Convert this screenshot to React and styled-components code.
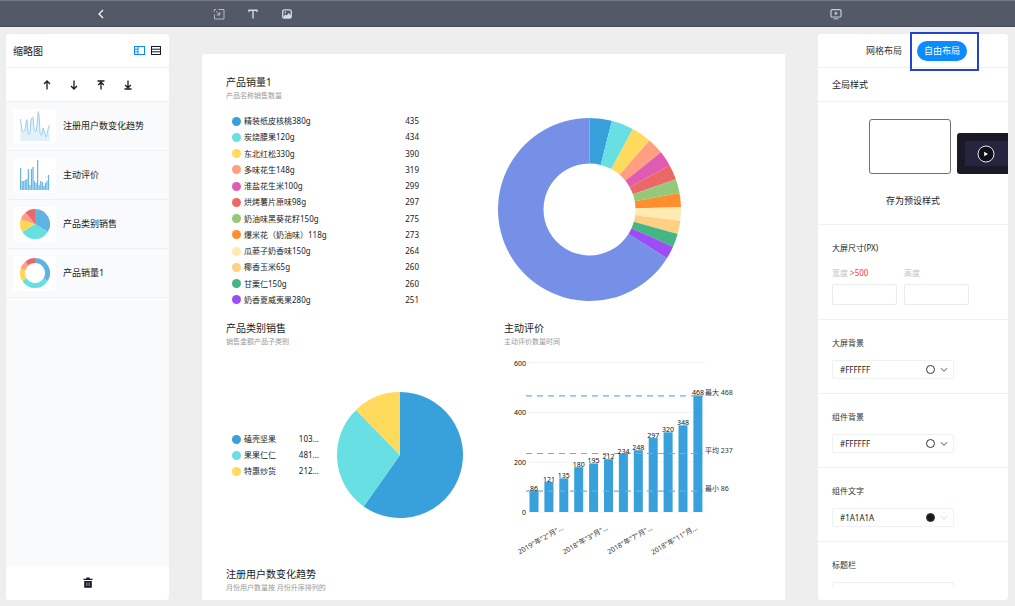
import React, { useState } from "react";
import styled, { createGlobalStyle } from "styled-components";

const GlobalStyle = createGlobalStyle`
	* {
		box-sizing: border-box;
	}
	body {
		margin: 0;
		background: #eeeeee;
		color: #222222;
		font-family: "Noto Sans", "Noto Sans CJK SC", sans-serif;
		font-size: 9px;
		line-height: 16px;
	}
	button, input, select {
		font: inherit;
		color: inherit;
	}
	h2, p, ul {
		margin: 0;
		padding: 0;
		font-weight: 400;
		list-style: none;
	}
	svg {
		display: block;
	}
`;

const Page = styled.div`
	display: flex;
	flex-direction: column;
	height: 100vh;
`;

const TopBar = styled.header`
	display: grid;
	grid-template-columns: 202px 1fr 196px;
	flex: none;
	height: 27px;
	background: #535966;
	border-top: 1px solid #747780;
	border-bottom: 1px solid #464c5a;
`;

const TopGroup = styled.div`
	display: flex;
	align-items: center;
	justify-content: ${({ $align }) => $align || "flex-start"};
	gap: 18px;
	padding: 0 9px;
`;

const IconButton = styled.button`
	display: flex;
	align-items: center;
	justify-content: center;
	width: 16px;
	height: 16px;
	padding: 0;
	border: 0;
	background: none;
	color: ${({ $color }) => $color || "#1a1a24"};
	cursor: pointer;
`;

const Workspace = styled.div`
	display: flex;
	flex: 1;
	gap: 33px;
	min-height: 0;
	padding: 7px 7px 6px 6px;
`;

const Panel = styled.aside`
	display: flex;
	flex-direction: column;
	flex: none;
	width: ${({ $width }) => $width};
	background: #ffffff;
	border-radius: 3px;
`;

const PanelRow = styled.div`
	display: flex;
	align-items: center;
	justify-content: ${({ $justify }) => $justify || "flex-start"};
	gap: ${({ $gap }) => $gap || "0"};
	flex: none;
	height: 34px;
	padding: 0 ${({ $pad }) => $pad || "14px"};
	border-bottom: 1px solid #f0f0f0;
`;

const PanelTitle = styled.h2`
	flex: 1;
	font-size: 10px;
	line-height: 16px;
`;

const ThumbList = styled.ul`
	flex: 1;
	background: #f8fafb;
`;

const ThumbItem = styled.li`
	display: flex;
	align-items: center;
	gap: 7px;
	height: 49px;
	padding-left: 7px;
	border-bottom: 1px solid #eeeff0;
	cursor: pointer;
`;

const ThumbBox = styled.div`
	display: flex;
	align-items: center;
	justify-content: center;
	width: 43px;
	height: 35px;
	background: #ffffff;
	border-radius: 3px;
`;

const PanelFooter = styled.div`
	display: flex;
	align-items: center;
	justify-content: center;
	flex: none;
	height: 34px;
`;

const Canvas = styled.main`
	display: grid;
	grid-template-columns: 1fr 1fr;
	grid-auto-rows: 246px;
	column-gap: 17px;
	flex: 1;
	min-width: 0;
	margin-top: 20px;
	padding: 20px 20px 0 24px;
	background: #ffffff;
	overflow: hidden;
`;

const Card = styled.section`
	display: flex;
	flex-direction: column;
	grid-column: ${({ $wide }) => ($wide ? "1 / -1" : "auto")};
`;

const CardTitle = styled.h2`
	font-size: 10px;
	line-height: 16px;
	color: #1a1a1a;
`;

const CardSub = styled.p`
	font-size: 7px;
	line-height: 12px;
	color: #999999;
`;

const CardBody = styled.div`
	display: flex;
	align-items: ${({ $align }) => $align || "flex-start"};
	padding: ${({ $pad }) => $pad || "0"};
`;

const Legend = styled.ul`
	display: flex;
	flex-direction: column;
	justify-content: space-between;
	width: ${({ $width }) => $width};
	height: ${({ $height }) => $height};
	font-size: 8px;
`;

const LegendRow = styled.li`
	display: flex;
	align-items: center;
	gap: 3px;
	height: 16px;
`;

const Dot = styled.span`
	width: 9px;
	height: 9px;
	border-radius: 50%;
	background: ${({ $color }) => $color};
`;

const LegendName = styled.span`
	flex: 1;
`;

const Tab = styled.button`
	height: 20px;
	padding: 0 7px;
	border: 0;
	border-radius: 10px;
	line-height: 20px;
	background: ${({ $active }) => ($active ? "#0a8cff" : "transparent")};
	color: ${({ $active }) => ($active ? "#ffffff" : "#333333")};
	cursor: pointer;
`;

const Marked = styled.div`
	position: relative;
	display: flex;
	&::after {
		content: "";
		position: absolute;
		top: -9px;
		right: -12px;
		bottom: -10px;
		left: -7px;
		border: 2px solid #2245c9;
		pointer-events: none;
	}
`;

const Settings = styled.div`
	flex: 1;
	min-height: 0;
	margin-bottom: 14px;
	overflow: hidden;
`;

const PresetBlock = styled.div`
	display: flex;
	flex-direction: column;
	gap: 19px;
	height: 123px;
	padding-top: 17px;
	border-bottom: 1px solid #f0f0f0;
`;

const PresetRow = styled.div`
	display: flex;
	align-items: flex-end;
	gap: 6px;
	padding-left: 51px;
	overflow: hidden;
`;

const LightPreset = styled.button`
	flex: none;
	width: 82px;
	height: 55px;
	border: 1px solid #707070;
	border-radius: 3px;
	background: #ffffff;
`;

const DarkPreset = styled.button`
	display: flex;
	flex: none;
	width: 58px;
	height: 41px;
	padding: 8px 0 8px 8px;
	border: 0;
	border-radius: 3px;
	background: #191928;
`;

const DarkPresetInner = styled.span`
	display: flex;
	flex: 1;
	align-items: center;
	padding-left: 12px;
	height: 25px;
	background: #25253f;
`;

const PresetSave = styled.button`
	align-self: center;
	padding: 0;
	border: 0;
	background: none;
	cursor: pointer;
`;

const Section = styled.div`
	display: flex;
	flex-direction: column;
	padding: 15px 14px 14px;
	border-bottom: 1px solid #f0f0f0;
	font-size: 8px;
`;

const SectionLabel = styled.label`
	color: #333333;
`;

const SizeRow = styled.div`
	display: flex;
	gap: 7px;
	padding-top: 9px;
`;

const SizeField = styled.label`
	display: flex;
	flex-direction: column;
	gap: 3px;
	color: #c4c4c4;
`;

const Warn = styled.span`
	color: #ff3333;
`;

const SizeInput = styled.input`
	width: 65px;
	height: 21px;
	padding: 0 6px;
	border: 1px solid #e9ebec;
	border-radius: 2px;
	outline: none;
`;

const ColorBox = styled.div`
	display: flex;
	align-items: center;
	gap: 5px;
	width: 122px;
	height: 19px;
	margin-top: 9px;
	padding: 0 5px 0 7px;
	border: 1px solid #eef1f2;
	border-radius: 2px;
`;

const ColorSelect = styled.select`
	flex: 1;
	min-width: 0;
	padding: 0;
	border: 0;
	background: none;
	appearance: none;
	outline: none;
`;

const ColorRing = styled.span`
	width: 9px;
	height: 9px;
	border: 1px solid #333333;
	border-radius: 50%;
	background: ${({ $color }) => $color};
`;

const SALES = [
	{ name: "精装纸皮核桃380g", value: 435, color: "#38a0da" },
	{ name: "炭烧腰果120g", value: 434, color: "#68e0e3" },
	{ name: "东北红松330g", value: 390, color: "#ffda5c" },
	{ name: "多味花生148g", value: 319, color: "#ff9e80" },
	{ name: "淮盐花生米100g", value: 299, color: "#e05cb0" },
	{ name: "烘烤薯片原味98g", value: 297, color: "#eb6868" },
	{ name: "奶油味黑葵花籽150g", value: 275, color: "#95c878" },
	{ name: "爆米花（奶油味）118g", value: 273, color: "#ff8f2e" },
	{ name: "瓜蒌子奶香味150g", value: 264, color: "#ffebb0" },
	{ name: "椰香玉米65g", value: 260, color: "#fdd083" },
	{ name: "甘栗仁150g", value: 260, color: "#44b584" },
	{ name: "奶香夏威夷果280g", value: 251, color: "#9d4df5" },
];

const OTHER_SALES = { value: 7310, color: "#7690e8" };

const CATEGORIES = [
	{ name: "磕壳坚果", value: 1030, label: "103...", color: "#38a0da" },
	{ name: "果果仁仁", value: 481, label: "481...", color: "#68e0e3" },
	{ name: "特惠炒货", value: 212, label: "212...", color: "#ffda5c" },
];

const REVIEWS = [86, 121, 135, 180, 195, 212, 234, 248, 297, 320, 348, 468];

const REVIEW_MARKS = [
	{ label: "最大 468", value: 468 },
	{ label: "平均 237", value: 237 },
	{ label: "最小 86", value: 86 },
];

const REVIEW_MONTHS = [
	{ bar: 2, label: '2019"年"2"月"...' },
	{ bar: 5, label: '2018"年"3"月"...' },
	{ bar: 8, label: '2018"年"7"月"...' },
	{ bar: 11, label: '2018"年"11"月...' },
];

const THUMB_SLICES = [
	{ value: 34, color: "#5fb3e2" },
	{ value: 32, color: "#64dfe2" },
	{ value: 14, color: "#ffd658" },
	{ value: 9, color: "#ff9e80" },
	{ value: 11, color: "#eb6868" },
];

const THUMB_BARS = [
	22, 9, 9, 10, 11, 21, 5, 21, 23, 9, 7, 30, 5, 9, 8, 4, 7, 9, 15,
];

const TREND_LINE =
	"M0.5 8L2 20C3 21 4 21 5 19L6.5 9C7 8 7.5 9 8 22C8.5 24 9.5 24 10 20L11 9C11.5 7 12.5 6 13 6.5L14 17C14.5 20 15.5 21 16 20L17 15L18.2 0.5L19 4L20 21C20.5 25 21.5 25 22 23L23 17L24.5 21C25 23 25.5 25 26 26C27 26 27.5 19 28 18L29.5 14";

const point = (c, r, turn) => {
	const a = turn * Math.PI * 2;
	return `${c + r * Math.sin(a)} ${c - r * Math.cos(a)}`;
};

const Pie = ({ data, radius, hole = 0, title }) => {
	const total = data.reduce((sum, d) => sum + d.value, 0);
	const size = radius * 2;
	let used = 0;
	return (
		<svg width={size} height={size} role="img" aria-label={title}>
			{data.map((d, index) => {
				const from = used / total;
				used += d.value;
				const to = used / total;
				const large = to - from > 0.5 ? 1 : 0;
				const inner = hole
					? `L${point(radius, hole, to)}A${hole} ${hole} 0 ${large} 0 ${point(
							radius,
							hole,
							from
					  )}Z`
					: `L${radius} ${radius}Z`;
				return (
					<path
						key={index}
						fill={d.color}
						d={`M${point(radius, radius, from)}A${radius} ${radius} 0 ${large} 1 ${point(
							radius,
							radius,
							to
						)}${inner}`}
					/>
				);
			})}
		</svg>
	);
};

const ChartLegend = ({ data, width, height }) => (
	<Legend $width={width} $height={height}>
		{data.map((d) => (
			<LegendRow key={d.name}>
				<Dot $color={d.color} />
				<LegendName>{d.name}</LegendName>
				<span>{d.label || d.value}</span>
			</LegendRow>
		))}
	</Legend>
);

const ReviewChart = () => {
	const base = 160;
	const scale = (v) => base - v * 0.249;
	const barX = (index) => 30 + index * 14.9;
	return (
		<svg width="240" height="210" fontSize="7" fill="#333" role="img" aria-label="主动评价">
			{[0, 200, 400, 600].map((tick) => (
				<g key={tick}>
					<line x1="24" x2="201" y1={scale(tick)} y2={scale(tick)} stroke="#f2f2f2" />
					<text x="22" y={scale(tick) + 3} textAnchor="end" fill="#111">
						{tick}
					</text>
				</g>
			))}
			{REVIEWS.map((v, index) => (
				<rect
					key={index}
					x={barX(index) - 4.5}
					y={scale(v)}
					width="9"
					height={base - scale(v)}
					fill="#38a0da"
				/>
			))}
			{REVIEW_MARKS.map((m) => (
				<g key={m.label}>
					<line
						x1="22"
						x2="199"
						y1={scale(m.value) + 0.5}
						y2={scale(m.value) + 0.5}
						stroke="#5db7e4"
						strokeWidth="1.2"
						strokeDasharray="6 5"
					/>
					<text x="201" y={scale(m.value)}>
						{m.label}
					</text>
				</g>
			))}
			{REVIEWS.map((v, index) => (
				<text key={index} x={barX(index)} y={scale(v)} textAnchor="middle" fill="#111">
					{v}
				</text>
			))}
			{REVIEW_MONTHS.map((m) => (
				<text
					key={m.bar}
					textAnchor="end"
					transform={`translate(${barX(m.bar)} 177) rotate(-30)`}>
					{m.label}
				</text>
			))}
		</svg>
	);
};

const TrendThumb = () => (
	<svg width="30" height="30" viewBox="0 0 30 30">
		<path d={`${TREND_LINE}V30H0.5Z`} fill="#e1f0fa" />
		<path d={TREND_LINE} fill="none" stroke="#9bcfee" />
	</svg>
);

const BarThumb = () => (
	<svg width="30" height="30" viewBox="0 0 30 30">
		{THUMB_BARS.map((h, index) => (
			<rect
				key={index}
				x={index * 1.55}
				y={30 - h}
				width="1.2"
				height={h}
				fill="#62b4e3"
			/>
		))}
	</svg>
);

const THUMBS = [
	{ title: "注册用户数变化趋势", icon: <TrendThumb /> },
	{ title: "主动评价", icon: <BarThumb /> },
	{ title: "产品类别销售", icon: <Pie data={THUMB_SLICES} radius={15} /> },
	{ title: "产品销量1", icon: <Pie data={THUMB_SLICES} radius={15} hole={10} /> },
];

const Icon = ({ size = 12, children }) => (
	<svg
		width={size}
		height={size}
		viewBox="0 0 12 12"
		fill="none"
		stroke="currentColor"
		aria-hidden="true">
		{children}
	</svg>
);

const MOVES = [
	{ title: "上移", d: "M6 10.5V2M3 5L6 2L9 5" },
	{ title: "下移", d: "M6 1.5V10M3 7L6 10L9 7" },
	{ title: "置顶", d: "M2.5 2H9.5M6 10.5V3M3.2 6L6 3.2L8.8 6" },
	{ title: "置底", d: "M2.5 10H9.5M6 1.5V9M3.2 6L6 8.8L8.8 6" },
];

const Chevron = ({ color }) => (
	<svg width="8" height="6" viewBox="0 0 8 6" fill="none" stroke={color}>
		<path d="M1 1.2L4 4.3L7 1.2" />
	</svg>
);

const ColorSection = ({ id, label, color, chevron = "#555" }) => (
	<Section>
		<SectionLabel htmlFor={id}>{label}</SectionLabel>
		<ColorBox>
			<ColorSelect id={id} defaultValue={color}>
				<option value={color}>{color}</option>
			</ColorSelect>
			<ColorRing $color={color} />
			<Chevron color={chevron} />
		</ColorBox>
	</Section>
);

const App = () => {
	const [layout, setLayout] = useState("free");

	return (
		<>
			<GlobalStyle />
			<Page>
				<TopBar>
					<TopGroup $align="center">
						<IconButton aria-label="返回" $color="#ffffff">
							<Icon>
								<path d="M8 2L4 6L8 10" strokeWidth="1.2" />
							</Icon>
						</IconButton>
					</TopGroup>
					<TopGroup>
						<IconButton aria-label="组件" $color="#b3bccb">
							<Icon>
								<path d="M5.5 1.5H11V11H1.5V6.5M1.2 3.8V1.5H3.2M3.2 3.5L6.5 6.8M6.8 4V7H3.8" />
							</Icon>
						</IconButton>
						<IconButton aria-label="文本" $color="#cfdcec">
							<Icon>
								<path d="M2 4V2.2H10V4M6 2.2V10.5" strokeWidth="1.4" />
							</Icon>
						</IconButton>
						<IconButton aria-label="图片" $color="#cfdcec">
							<Icon>
								<rect x="1.7" y="1.8" width="8.6" height="8.4" rx="1.8" strokeWidth="1.3" />
								<path d="M2 9.5L4.2 6.2L5.6 7.5L7.8 5L10 7.5V10H2Z" fill="currentColor" stroke="none" />
								<circle cx="4.3" cy="4.4" r="0.8" fill="currentColor" stroke="none" />
							</Icon>
						</IconButton>
					</TopGroup>
					<TopGroup>
						<IconButton aria-label="预览" $color="#c3cddb">
							<Icon>
								<rect x="1" y="1.6" width="10" height="7.4" rx="1.2" strokeWidth="1.2" />
								<path d="M4.8 3.4L8 5.3L4.8 7.2Z" fill="currentColor" stroke="none" />
								<path d="M3.5 10.8H8.5" />
							</Icon>
						</IconButton>
					</TopGroup>
				</TopBar>

				<Workspace>
					<Panel $width="163px">
						<PanelRow $pad="5px 0 7px">
							<PanelTitle>缩略图</PanelTitle>
							<IconButton aria-label="缩略图视图" $color="#0a8cff">
								<Icon>
									<rect x="0.5" y="1.5" width="10" height="8" />
									<path d="M4 1.5V9.5M0.5 4.2H4M0.5 6.8H4" />
								</Icon>
							</IconButton>
							<IconButton aria-label="列表视图">
								<Icon>
									<rect x="1.5" y="1.5" width="9" height="8" />
									<path d="M1.5 4.2H10.5M1.5 6.8H10.5" />
								</Icon>
							</IconButton>
						</PanelRow>
						<PanelRow $justify="center" $gap="11px">
							{MOVES.map((m) => (
								<IconButton key={m.title} aria-label={m.title}>
									<Icon>
										<path d={m.d} strokeWidth="1.3" />
									</Icon>
								</IconButton>
							))}
						</PanelRow>
						<ThumbList>
							{THUMBS.map((t) => (
								<ThumbItem key={t.title}>
									<ThumbBox>{t.icon}</ThumbBox>
									<span>{t.title}</span>
								</ThumbItem>
							))}
						</ThumbList>
						<PanelFooter>
							<IconButton aria-label="删除">
								<Icon>
									<path
										d="M1.5 1.8H4.3V0.6H7.7V1.8H10.5V3.1H1.5ZM2.2 3.9H9.8V10.8H2.2Z"
										fill="currentColor"
										stroke="none"
									/>
									<path d="M4.5 5.3V9M6 5.3V9M7.5 5.3V9" stroke="#aaaab4" strokeWidth="0.6" />
								</Icon>
							</IconButton>
						</PanelFooter>
					</Panel>

					<Canvas>
						<Card $wide>
							<CardTitle>产品销量1</CardTitle>
							<CardSub>产品名称销售数量</CardSub>
							<CardBody $pad="11px 0 0 6px">
								<ChartLegend data={SALES} width="187px" height="195px" />
								<CardBody $pad="5px 0 0 79px">
									<Pie
										title="产品销量1"
										data={[...SALES, OTHER_SALES]}
										radius={91.5}
										hole={46}
									/>
								</CardBody>
							</CardBody>
						</Card>
						<Card>
							<CardTitle>产品类别销售</CardTitle>
							<CardSub>销售金额产品子类别</CardSub>
							<CardBody $align="center" $pad="44px 0 0 6px">
								<ChartLegend data={CATEGORIES} width="87px" height="48px" />
								<CardBody $pad="0 0 0 18px">
									<Pie title="产品类别销售" data={CATEGORIES} radius={63} />
								</CardBody>
							</CardBody>
						</Card>
						<Card>
							<CardTitle>主动评价</CardTitle>
							<CardSub>主动评价数量时间</CardSub>
							<CardBody $pad="4px 0 0">
								<ReviewChart />
							</CardBody>
						</Card>
						<Card $wide>
							<CardTitle>注册用户数变化趋势</CardTitle>
							<CardSub>月份用户数量按 月份升序排列的</CardSub>
						</Card>
					</Canvas>

					<Panel $width="190px">
						<PanelRow $justify="center" $gap="8px">
							<Tab $active={layout === "grid"} onClick={() => setLayout("grid")}>
								网格布局
							</Tab>
							<Marked>
								<Tab $active={layout === "free"} onClick={() => setLayout("free")}>
									自由布局
								</Tab>
							</Marked>
						</PanelRow>
						<PanelRow>全局样式</PanelRow>
						<Settings>
							<PresetBlock>
								<PresetRow>
									<LightPreset aria-label="浅色" />
									<DarkPreset aria-label="深色">
										<DarkPresetInner>
											<svg width="18" height="18" viewBox="0 0 18 18">
												<circle cx="9" cy="9" r="8" fill="#10101c" stroke="#e8e8ee" />
												<path d="M7.2 6.8L11 9L7.2 11.2Z" fill="#ffffff" />
											</svg>
										</DarkPresetInner>
									</DarkPreset>
								</PresetRow>
								<PresetSave>存为预设样式</PresetSave>
							</PresetBlock>
							<Section>
								<span>大屏尺寸(PX)</span>
								<SizeRow>
									<SizeField>
										<span>
											宽度 <Warn>&gt;500</Warn>
										</span>
										<SizeInput />
									</SizeField>
									<SizeField>
										<span>高度</span>
										<SizeInput />
									</SizeField>
								</SizeRow>
							</Section>
							<ColorSection id="screen-bg" label="大屏背景" color="#FFFFFF" />
							<ColorSection id="widget-bg" label="组件背景" color="#FFFFFF" />
							<ColorSection
								id="widget-text"
								label="组件文字"
								color="#1A1A1A"
								chevron="#d8d8d8"
							/>
							<Section>
								<SectionLabel htmlFor="title-bar">标题栏</SectionLabel>
								<ColorBox>
									<ColorSelect id="title-bar" />
								</ColorBox>
							</Section>
						</Settings>
					</Panel>
				</Workspace>
			</Page>
		</>
	);
};

export default App;
